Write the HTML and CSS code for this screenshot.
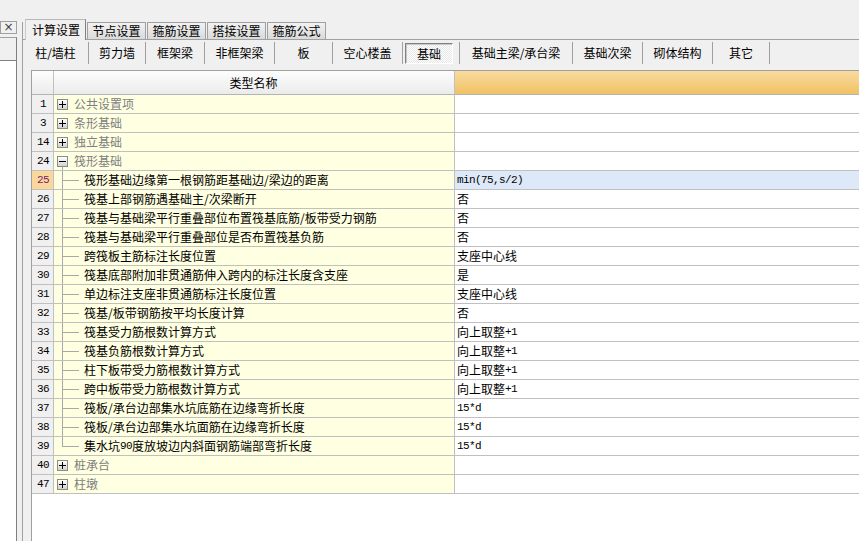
FILE: index.html
```html
<!DOCTYPE html>
<html lang="zh-CN">
<head>
<meta charset="utf-8">
<title>计算设置</title>
<link rel="stylesheet" href="styles.css">
</head>
<body>
<div class="app">
  <aside class="side">
    <div class="close">×</div>
    <div class="side-body">
      <div class="side-list"></div>
    </div>
  </aside>
  <main class="main">
    <div class="tabs">
      <span class="tab-lead"></span>
      <span class="tab active">计算设置</span>
      <span class="tab">节点设置</span>
      <span class="tab">箍筋设置</span>
      <span class="tab">搭接设置</span>
      <span class="tab">箍筋公式</span>
    </div>
    <section class="panel">
      <nav class="subtabs">
        <span class="sub w65">柱/墙柱</span><span class="sep"></span>
        <span class="sub w56">剪力墙</span><span class="sep"></span>
        <span class="sub w58">框架梁</span><span class="sep"></span>
        <span class="sub w69">非框架梁</span><span class="sep"></span>
        <span class="sub w57">板</span><span class="sep"></span>
        <span class="sub w69">空心楼盖</span><span class="sep"></span>
        <span class="sub w56"><span class="pressed">基础</span></span><span class="sep"></span>
        <span class="sub w112">基础主梁/承台梁</span><span class="sep"></span>
        <span class="sub w69">基础次梁</span><span class="sep"></span>
        <span class="sub w69">砌体结构</span><span class="sep"></span>
        <span class="sub w56">其它</span><span class="sep"></span>
      </nav>
      <div class="grid">
        <div class="row head">
          <div class="num"></div>
          <div class="name">类型名称</div>
          <div class="val"></div>
        </div>

        <div class="row"><div class="num m">1</div><div class="name group"><span class="tbox plus"></span>公共设置项</div><div class="val"></div></div>
        <div class="row"><div class="num m">3</div><div class="name group"><span class="tbox plus"></span>条形基础</div><div class="val"></div></div>
        <div class="row"><div class="num m">14</div><div class="name group"><span class="tbox plus"></span>独立基础</div><div class="val"></div></div>
        <div class="row"><div class="num m">24</div><div class="name group open"><span class="tbox"></span>筏形基础</div><div class="val"></div></div>

        <div class="row sel"><div class="num m">25</div><div class="name child">筏形基础边缘第一根钢筋距基础边/梁边的距离</div><div class="val"><span class="m">min(75,s/2)</span></div></div>
        <div class="row"><div class="num m">26</div><div class="name child">筏基上部钢筋遇基础主/次梁断开</div><div class="val">否</div></div>
        <div class="row"><div class="num m">27</div><div class="name child">筏基与基础梁平行重叠部位布置筏基底筋/板带受力钢筋</div><div class="val">否</div></div>
        <div class="row"><div class="num m">28</div><div class="name child">筏基与基础梁平行重叠部位是否布置筏基负筋</div><div class="val">否</div></div>
        <div class="row"><div class="num m">29</div><div class="name child">跨筏板主筋标注长度位置</div><div class="val">支座中心线</div></div>
        <div class="row"><div class="num m">30</div><div class="name child">筏基底部附加非贯通筋伸入跨内的标注长度含支座</div><div class="val">是</div></div>
        <div class="row"><div class="num m">31</div><div class="name child">单边标注支座非贯通筋标注长度位置</div><div class="val">支座中心线</div></div>
        <div class="row"><div class="num m">32</div><div class="name child">筏基/板带钢筋按平均长度计算</div><div class="val">否</div></div>
        <div class="row"><div class="num m">33</div><div class="name child">筏基受力筋根数计算方式</div><div class="val">向上取整<span class="m">+1</span></div></div>
        <div class="row"><div class="num m">34</div><div class="name child">筏基负筋根数计算方式</div><div class="val">向上取整<span class="m">+1</span></div></div>
        <div class="row"><div class="num m">35</div><div class="name child">柱下板带受力筋根数计算方式</div><div class="val">向上取整<span class="m">+1</span></div></div>
        <div class="row"><div class="num m">36</div><div class="name child">跨中板带受力筋根数计算方式</div><div class="val">向上取整<span class="m">+1</span></div></div>
        <div class="row"><div class="num m">37</div><div class="name child">筏板/承台边部集水坑底筋在边缘弯折长度</div><div class="val"><span class="m">15*d</span></div></div>
        <div class="row"><div class="num m">38</div><div class="name child">筏板/承台边部集水坑面筋在边缘弯折长度</div><div class="val"><span class="m">15*d</span></div></div>
        <div class="row"><div class="num m">39</div><div class="name child last">集水坑<span class="n">90</span>度放坡边内斜面钢筋端部弯折长度</div><div class="val"><span class="m">15*d</span></div></div>

        <div class="row"><div class="num m">40</div><div class="name group"><span class="tbox plus"></span>桩承台</div><div class="val"></div></div>
        <div class="row"><div class="num m">47</div><div class="name group"><span class="tbox plus"></span>柱墩</div><div class="val"></div></div>
      </div>
    </section>
  </main>
</div>
</body>
</html>
```

FILE: styles.css
```css
* { box-sizing: border-box; }

html, body {
  margin: 0;
  padding: 0;
}

body {
  width: 859px;
  height: 541px;
  overflow: hidden;
  background: #f0f0f0;
  color: #000;
  font-family: "Noto Sans CJK SC", "Noto Sans", sans-serif;
  font-size: 12px;
  line-height: 18px;
}

.app {
  display: flex;
  height: 541px;
}

/* left docked panel */
.side {
  width: 17px;
  flex: none;
  display: flex;
  flex-direction: column;
  padding-top: 21px;
}

.close {
  height: 13px;
  width: 17px;
  border: 1px solid #a0a0a0;
  font-family: "DejaVu Sans", sans-serif;
  font-size: 12px;
  line-height: 10px;
  text-align: center;
  color: #404040;
}

.side-body {
  flex: 1;
  margin-top: 3px;
  border-top: 1px solid #a0a0a0;
  border-right: 1px solid #808080;
  display: flex;
  flex-direction: column;
  padding-top: 22px;
}

.side-list {
  flex: 1;
  background: #fff;
  border-top: 1px solid #808080;
}

/* main area */
.main {
  flex: 1;
  display: flex;
  flex-direction: column;
  margin-left: 5px;
  padding-top: 19px;
  min-width: 0;
}

.tabs {
  display: flex;
  align-items: flex-end;
  height: 20px;
  position: relative;
  z-index: 2;
}

.tab-lead {
  width: 3px;
  height: 17px;
  border-left: 1px solid #a0a0a0;
}

.tab {
  height: 17px;
  width: 59px;
  margin-left: 1px;
  border: 1px solid #a0a0a0;
  border-bottom: none;
  background: linear-gradient(#f2f2f2, #dadada);
  text-align: center;
  line-height: 16px;
  white-space: nowrap;
}

.tab.active {
  height: 21px;
  width: 61px;
  margin-left: 0;
  margin-bottom: -1px;
  background: #f0f0f0;
  border-color: #b8b8b8 #808080 #808080 #c8c8c8;
  line-height: 19px;
  padding-left: 1px;
}

.panel {
  flex: 1;
  display: flex;
  flex-direction: column;
  border-left: 1px solid #a0a0a0;
  border-top: 1px solid #a0a0a0;
  min-height: 0;
}

/* sub tab bar */
.subtabs {
  display: flex;
  height: 24px;
  flex: none;
  white-space: nowrap;
}

.sub {
  display: flex;
  align-items: center;
  justify-content: center;
  height: 24px;
  padding-top: 1px;
}

.w56 { width: 56px; }
.w57 { width: 57px; }
.w58 { width: 58px; }
.w65 { width: 65px; }
.w69 { width: 69px; }
.w112 { width: 112px; }

.sep {
  width: 1px;
  height: 22px;
  margin-top: 2px;
  background: #a0a0a0;
  flex: none;
}

.pressed {
  display: flex;
  align-items: center;
  justify-content: center;
  width: 48px;
  height: 21px;
  margin-top: 2px;
  margin-left: -4px;
  border: 1px solid;
  border-color: #808080 #ffffff #ffffff #808080;
  box-shadow: inset 1px 1px 0 #c8c8c8;
  background: repeating-conic-gradient(#ffffff 0 25%, #e6e6e6 0 50%) 0 0 / 2px 2px;
}

/* grid */
.grid {
  flex: 1;
  margin-left: 8px;
  margin-top: 6px;
  background: #fff;
  border-left: 1px solid #a0a0a0;
  border-top: 1px solid #a0a0a0;
}

.row {
  display: flex;
  height: 19px;
}

.row > div {
  border-bottom: 1px solid #c0c0c0;
  white-space: nowrap;
  overflow: hidden;
}

.num {
  width: 22px;
  flex: none;
  border-right: 1px solid #c0c0c0;
  background: #f0f0f0;
  text-align: center;
  padding-left: 1px;
}

.name {
  width: 401px;
  flex: none;
  border-right: 1px solid #c0c0c0;
  background: #ffffe1;
  display: flex;
  align-items: center;
  position: relative;
}

.val {
  flex: 1;
  padding-left: 2px;
  display: flex;
  align-items: center;
}

.m {
  font-family: "Liberation Mono", monospace;
  font-size: 11px;
  letter-spacing: -0.6px;
}

.n {
  font-family: "Liberation Mono", monospace;
  font-size: 11px;
  letter-spacing: -0.6px;
}

.row.head {
  height: 24px;
}

.row.head > div {
  border-bottom: 1px solid #b4b4b4;
  line-height: 23px;
}

.row.head .num {
  background: linear-gradient(#fdfdfd, #ebebeb);
}

.row.head .name {
  background: linear-gradient(#fdfdfd, #ebebeb);
  justify-content: center;
  padding-right: 1px;
}

.row.head .val {
  background: linear-gradient(#f9dba0, #f0c264);
}

.row.sel .num {
  background: #fad89c;
  color: #7a1870;
}

.row.sel .val {
  background: #dde9f8;
}

/* tree */
.group {
  color: #808080;
}

.tbox {
  width: 11px;
  height: 11px;
  flex: none;
  margin-left: 3px;
  margin-right: 6px;
  border: 1px solid #8c8c8c;
  background: linear-gradient(#ffffff, #d2d2d2);
  position: relative;
}

.tbox::before {
  content: "";
  position: absolute;
  left: 1px;
  right: 1px;
  top: 4px;
  height: 1px;
  background: #000;
}

.tbox.plus::after {
  content: "";
  position: absolute;
  top: 1px;
  bottom: 1px;
  left: 4px;
  width: 1px;
  background: #000;
}

.group.open::after {
  content: "";
  position: absolute;
  left: 8px;
  top: 15px;
  bottom: -1px;
  width: 1px;
  background: #a8a8a8;
}

.child {
  padding-left: 30px;
}

.child::before {
  content: "";
  position: absolute;
  left: 9px;
  top: 9px;
  width: 16px;
  height: 1px;
  background: #a8a8a8;
}

.child::after {
  content: "";
  position: absolute;
  left: 8px;
  top: 0;
  bottom: -1px;
  width: 1px;
  background: #a8a8a8;
}

.child.last::after {
  bottom: auto;
  height: 10px;
}
```
